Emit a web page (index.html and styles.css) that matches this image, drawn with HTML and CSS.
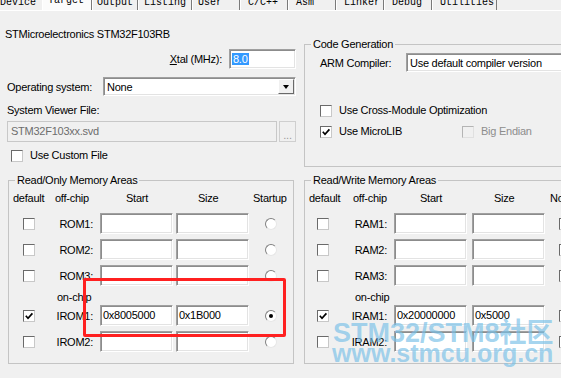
FILE: index.html
```html
<!DOCTYPE html>
<html lang="en">
<head>
  <meta charset="UTF-8" />
  <title>Options for Target - Target</title>
  <link rel="stylesheet" href="styles.css">
</head>
<body>

  <div class="tabs">
    <div class="tab tab-device">Device</div>
    <div class="tab tab-target">Target</div>
    <div class="tab tab-output">Output</div>
    <div class="tab tab-listing">Listing</div>
    <div class="tab tab-user">User</div>
    <div class="tab">C/C++</div>
    <div class="tab">Asm</div>
    <div class="tab">Linker</div>
    <div class="tab">Debug</div>
    <div class="tab tab-util">Utilities</div>
  </div>

  <div class="top">
    <div class="left">
      <div class="device">STMicroelectronics STM32F103RB</div>

      <div class="xtal-row">
        <span><u>X</u>tal (MHz):</span>
        <div class="edit xtal"><span class="sel">8.0</span></div>
      </div>

      <div class="os-row">
        <span>Operating system:</span>
        <div class="edit combo os">
          <span>None</span>
          <span class="drop"><i class="arrow"></i></span>
        </div>
      </div>

      <div class="svf-label">System Viewer File:</div>
      <div class="svf-row">
        <div class="edit disabled svf">STM32F103xx.svd</div>
        <div class="dots">...</div>
      </div>

      <label class="check custom"><span class="cb"></span>Use Custom File</label>
    </div>

    <fieldset class="group codegen">
      <legend>Code Generation</legend>
      <div class="group-body">
        <div class="arm-row">
          <span class="arm-label">ARM Compiler:</span>
          <div class="edit combo arm">Use default compiler version</div>
        </div>
        <label class="check cross"><span class="cb"></span>Use Cross-Module Optimization</label>
        <div class="lib-row">
          <label class="check microlib">
            <span class="cb"><svg viewBox="0 0 10 10"><path d="M1.8 4.8 L4 7.2 L8.4 2.4" /></svg></span>Use MicroLIB
          </label>
          <label class="check dim"><span class="cb off"></span>Big Endian</label>
        </div>
      </div>
    </fieldset>
  </div>

  <div class="bottom">
    <fieldset class="group ro">
      <legend>Read/Only Memory Areas</legend>
      <div class="mem-grid">
        <div class="hd hd-default">default</div>
        <div class="hd">off-chip</div>
        <div class="hd hd-start">Start</div>
        <div class="hd hd-size">Size</div>
        <div class="hd hd-last">Startup</div>

        <div class="cell"><span class="cb"></span></div>
        <div class="cell name">ROM1:</div>
        <div class="edit"></div>
        <div class="edit"></div>
        <div class="cell mid"><span class="radio"></span></div>

        <div class="cell"><span class="cb"></span></div>
        <div class="cell name">ROM2:</div>
        <div class="edit"></div>
        <div class="edit"></div>
        <div class="cell mid"><span class="radio"></span></div>

        <div class="cell"><span class="cb"></span></div>
        <div class="cell name">ROM3:</div>
        <div class="edit"></div>
        <div class="edit"></div>
        <div class="cell mid"><span class="radio"></span></div>

        <div class="chip">on-chip</div>

        <div class="cell"><span class="cb"><svg viewBox="0 0 10 10"><path d="M1.8 4.8 L4 7.2 L8.4 2.4" /></svg></span></div>
        <div class="cell name">IROM1:</div>
        <div class="edit">0x8005000</div>
        <div class="edit">0x1B000</div>
        <div class="cell mid"><span class="radio on"></span></div>

        <div class="cell"><span class="cb"></span></div>
        <div class="cell name">IROM2:</div>
        <div class="edit"></div>
        <div class="edit"></div>
        <div class="cell mid"><span class="radio"></span></div>
      </div>
    </fieldset>

    <fieldset class="group rw">
      <legend>Read/Write Memory Areas</legend>
      <div class="mem-grid">
        <div class="hd hd-default">default</div>
        <div class="hd">off-chip</div>
        <div class="hd hd-start">Start</div>
        <div class="hd hd-size">Size</div>
        <div class="hd hd-last">NoInit</div>

        <div class="cell"><span class="cb"></span></div>
        <div class="cell name">RAM1:</div>
        <div class="edit"></div>
        <div class="edit"></div>
        <div class="cell last"><span class="cb"></span></div>

        <div class="cell"><span class="cb"></span></div>
        <div class="cell name">RAM2:</div>
        <div class="edit"></div>
        <div class="edit"></div>
        <div class="cell last"><span class="cb"></span></div>

        <div class="cell"><span class="cb"></span></div>
        <div class="cell name">RAM3:</div>
        <div class="edit"></div>
        <div class="edit"></div>
        <div class="cell last"><span class="cb"></span></div>

        <div class="chip">on-chip</div>

        <div class="cell"><span class="cb"><svg viewBox="0 0 10 10"><path d="M1.8 4.8 L4 7.2 L8.4 2.4" /></svg></span></div>
        <div class="cell name">IRAM1:</div>
        <div class="edit">0x20000000</div>
        <div class="edit">0x5000</div>
        <div class="cell last"><span class="cb"></span></div>

        <div class="cell"><span class="cb"></span></div>
        <div class="cell name">IRAM2:</div>
        <div class="edit"></div>
        <div class="edit"></div>
        <div class="cell last"><span class="cb"></span></div>
      </div>
    </fieldset>
  </div>

  <!-- annotation and site watermark laid over the dialog -->
  <div class="mark"></div>
  <div class="watermark">
    <div class="wm-title">STM32/STM8社区</div>
    <div class="wm-url">www.stmcu.org.cn</div>
  </div>

</body>
</html>
```

FILE: styles.css
```css
* {
  box-sizing: border-box;
}
body {
  margin: 0;
  width: 561px;
  height: 378px;
  overflow: hidden;
  position: relative;
  background: #f0f0f0;
  font-family: 'Liberation Sans', Arial, sans-serif;
  font-size: 11px;
  letter-spacing: -0.25px;
  color: #000;
}

/* tab strip, cut off at the top */
.tabs {
  display: flex;
  height: 11px;
  overflow: hidden;
  border-bottom: 1px solid #fff;
  font-family: 'Liberation Mono', monospace;
  font-size: 10px;
  line-height: 6px;
  letter-spacing: 0;
}
.tab {
  width: 48px;
  padding-left: 7px;
  border-left: 1px solid #fff;
  border-right: 1px solid #7a7a7a;
  white-space: nowrap;
}
.tab-device {
  width: 42px;
  padding-left: 0;
  border: none;
}
.tab-target {
  width: 50px;
  padding-left: 5px;
  line-height: 2px;
  background: #fbfbfb;
}
.tab-output { width: 46px; padding-left: 4px; }
.tab-listing { width: 54px; padding-left: 5px; }
.tab-user { padding-left: 5px; }
.tab-util { width: 65px; }

/* top part */
.top {
  display: grid;
  grid-template-columns: 296px 330px;
  column-gap: 8px;
  height: 162px;
}
.left {
  display: flex;
  flex-direction: column;
  padding: 17px 0 0 7px;
}
.device {
  margin-left: -2px;
  line-height: 13px;
}
.xtal-row {
  display: flex;
  justify-content: flex-end;
  align-items: center;
  gap: 7px;
  height: 20px;
  margin-top: 8px;
}
.xtal {
  width: 67px;
  height: 20px;
  padding: 2px 0 0 2px;
}
.sel {
  background: #3399ff;
  color: #fff;
  line-height: 14px;
  padding: 0 1px;
}
.os-row {
  display: flex;
  justify-content: space-between;
  align-items: center;
  height: 19px;
  margin-top: 8px;
}
.os {
  width: 193px;
  height: 19px;
}
.svf-label {
  margin-top: 8px;
  line-height: 13px;
}
.svf-row {
  display: flex;
  gap: 2px;
  height: 21px;
  margin-top: 4px;
}
.svf {
  width: 270px;
  height: 21px;
  padding: 3px 0 0 3px;
}
.dots {
  width: 17px;
  height: 21px;
  border: 1px solid #cfcfcf;
  color: #9a9a9a;
  text-align: center;
  line-height: 26px;
}
.custom {
  margin-top: 7px;
  padding-left: 4px;
}

/* edit boxes */
.edit {
  background: #fff;
  border: 1px solid;
  border-color: #a0a0a0 #fff #fff #a0a0a0;
  box-shadow: inset 1px 1px 0 #8c8c8c, inset -1px -1px 0 #e3e3e3;
  white-space: nowrap;
  overflow: hidden;
}
.edit.disabled {
  background: #f0f0f0;
  color: #6d6d6d;
  border-color: #c8c8c8;
  box-shadow: none;
}
.combo {
  display: flex;
  align-items: center;
  justify-content: space-between;
  padding: 0 1px 0 3px;
}
.drop {
  display: flex;
  align-items: center;
  justify-content: center;
  width: 16px;
  height: 15px;
  background: #f0f0f0;
  border: 1px solid;
  border-color: #fff #696969 #696969 #fff;
}
.arrow {
  border-left: 3.5px solid transparent;
  border-right: 3.5px solid transparent;
  border-top: 4px solid #000;
}

/* checkboxes and radios */
.check {
  display: flex;
  align-items: center;
  gap: 7px;
  height: 13px;
  line-height: 13px;
}
.cb {
  display: flex;
  align-items: center;
  justify-content: center;
  width: 12px;
  height: 12px;
  background: #fff;
  border: 1px solid;
  border-color: #6a6a6a #c8c8c8 #c8c8c8 #6a6a6a;
}
.cb svg {
  width: 10px;
  height: 10px;
}
.cb path {
  fill: none;
  stroke: #000;
  stroke-width: 1.7;
}
.cb.off {
  background: #f0f0f0;
  border-color: #b4b4b4 #e0e0e0 #e0e0e0 #b4b4b4;
}
.dim {
  color: #8d8d8d;
}
.radio {
  display: flex;
  align-items: center;
  justify-content: center;
  width: 12px;
  height: 12px;
  border-radius: 50%;
  background: #fff;
  border: 1px solid;
  border-color: #808080 #e6e6e6 #e6e6e6 #808080;
}
.radio.on::after {
  content: "";
  width: 4px;
  height: 4px;
  border-radius: 50%;
  background: #000;
}

/* group boxes */
.group {
  margin: 0;
  padding: 0;
  min-width: 0;
  border: 1px solid #c4c4c4;
}
.group legend {
  margin-left: 6px;
  padding: 0 2px;
  line-height: 14px;
}
.codegen {
  align-self: start;
  margin-top: 26px;
}
.group-body {
  padding: 2px 0 28px 15px;
}
.arm-row {
  display: flex;
  align-items: center;
  height: 19px;
}
.arm-label {
  width: 86px;
}
.arm {
  width: 200px;
  height: 19px;
}
.cross {
  margin-top: 32px;
}
.lib-row {
  display: flex;
  margin-top: 8px;
}
.microlib {
  width: 142px;
}

/* memory areas */
.bottom {
  display: grid;
  grid-template-columns: 286px 330px;
  column-gap: 10px;
  padding-left: 8px;
}
.mem-grid {
  display: grid;
  grid-template-rows: 25px 26px 26px 26px 14px 26px 26px;
  align-items: start;
  padding: 1px 0 6px;
}
.ro .mem-grid {
  grid-template-columns: 46px 45px 76px 73px 43px;
}
.rw .mem-grid {
  grid-template-columns: 48px 41px 78px 73px 60px;
}
.hd {
  height: 21px;
  line-height: 21px;
  white-space: nowrap;
}
.hd-default { padding-left: 4px; }
.hd-start { padding-left: 26px; }
.hd-size { padding-left: 22px; }
.hd-last { padding-left: 4px; }
.rw .hd-last { padding-left: 5px; }
.cell {
  display: flex;
  align-items: center;
  height: 21px;
}
.ro .cell .cb { margin-left: 14px; }
.rw .cell .cb { margin-left: 12px; }
.rw .last .cb { margin-left: 14px; }
.name {
  justify-content: flex-end;
  padding-right: 7px;
}
.mid {
  justify-content: center;
}
.mem-grid .edit {
  width: 73px;
  height: 21px;
  padding: 2px 0 0 2px;
  line-height: 14px;
}
.chip {
  grid-column: 2 / -1;
  padding-left: 2px;
  line-height: 13px;
}

/* overlays */
.mark {
  position: absolute;
  left: 83px;
  top: 278px;
  width: 203px;
  height: 59px;
  border: 3px solid #ff2020;
  border-radius: 2px;
}
.watermark {
  position: absolute;
  left: 332px;
  top: 320px;
  color: rgba(120, 192, 232, 0.68);
  font-weight: bold;
  letter-spacing: 0;
  white-space: nowrap;
}
.wm-title {
  margin-left: 1px;
  font-family: 'Liberation Sans', 'Noto Sans CJK SC', sans-serif;
  font-size: 27px;
  line-height: 27px;
}
.wm-url {
  margin-top: -2px;
  font-size: 25px;
  line-height: 16px;
}
```
